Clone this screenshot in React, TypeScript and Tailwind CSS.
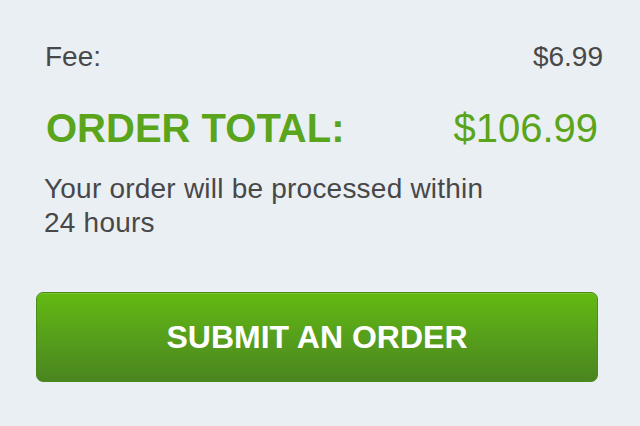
import React from "react";

export default function App() {
	return (
		<div
			className="w-[640px] h-[426px] bg-[#eaeff4] overflow-hidden"
			style={{ fontFamily: '"Liberation Sans", Arial, sans-serif' }}>
			<div className="pt-[40px]">
				<div className="flex justify-between pl-[45px] pr-[37px] text-[28px] leading-[34px] text-[#484848]">
					<span>Fee:</span>
					<span>$6.99</span>
				</div>
				<div className="flex justify-between pl-[46px] pr-[42px] mt-[32px] text-[40px] leading-[44px] text-[#5aa51b]">
					<span className="font-bold">ORDER TOTAL:</span>
					<span>$106.99</span>
				</div>
				<p className="mt-[22px] pl-[44px] max-w-[510px] text-[28px] leading-[34px] tracking-[0.22px] text-[#484848]">
					Your order will be processed within 24 hours
				</p>
				<div className="px-[36px] mt-[52px]">
					<button className="w-[562px] h-[90px] rounded-[7px] border border-[#4c8a1c] bg-gradient-to-b from-[#63ba10] to-[#4a851f] text-white font-bold text-[32px] shadow-[inset_0_1px_0_rgba(255,255,255,0.15)]">
						SUBMIT AN ORDER
					</button>
				</div>
			</div>
		</div>
	);
}
